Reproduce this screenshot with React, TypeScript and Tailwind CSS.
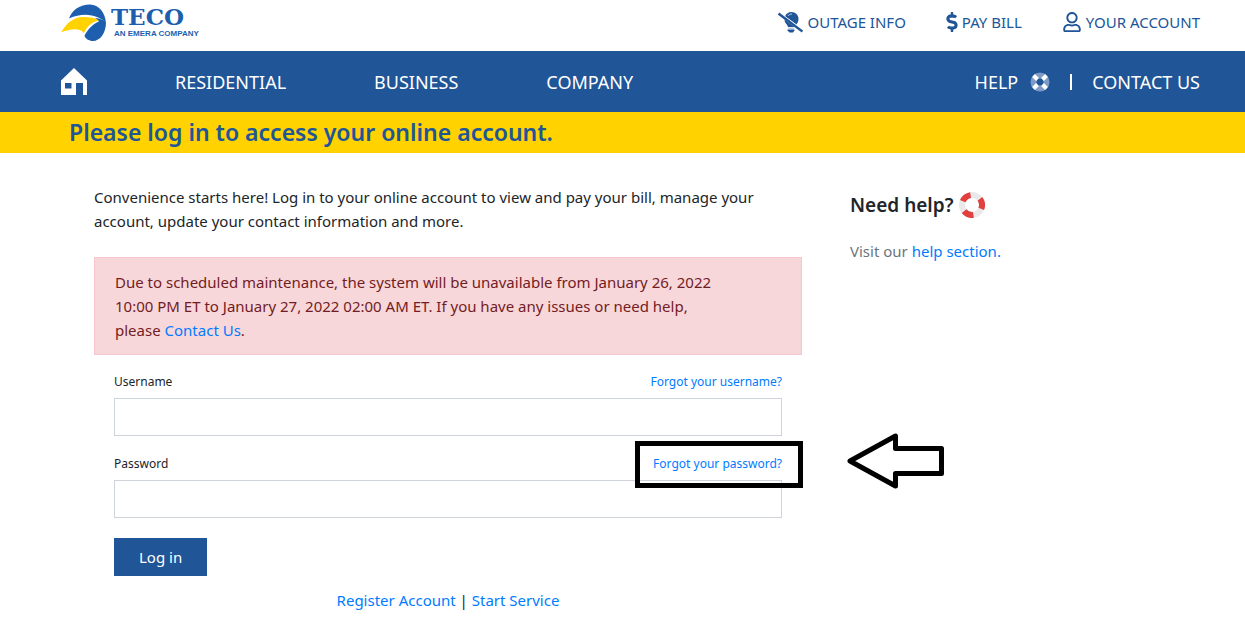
import type React from "react"
import { useState } from "react"
import { FaDollarSign, FaRegUser } from "react-icons/fa"

function TecoLogo() {
  return (
    <svg viewBox="0 0 142 38" className="h-[38px] w-[142px]" role="img" aria-label="TECO">
      {/* swoosh */}
      <path d="M8 14.500C11 6 19 0.500 29 0.500C38 1 44 8 45 19C39 12 24 7 8 14.500Z" fill="#1d5fae" />
      <path d="M34 14C39 14.500 43 16 45 18.500C45 29 39 37 32 37C28 37 24 34.500 23.500 31.500C27 25 32 20 38 17.500Z" fill="#1d5fae" />
      <path d="M0 28.500C5 20 12 13 22 13C29 13 35 14 38 16.500C31 18 26 22 23 29C18 23.500 9 25 0 28.500Z" fill="#ffd200" />
      <text x="50" y="21" fontFamily="DejaVu Serif, serif" fontWeight="700" fontSize="23" fill="#1d5fae">
        TECO
      </text>
      <text x="53" y="32" fontFamily="Liberation Sans, sans-serif" fontWeight="700" fontSize="8" fill="#1d5fae">
        AN EMERA COMPANY
      </text>
    </svg>
  )
}

function OutageIcon() {
  return (
    <svg viewBox="0 0 25 21" className="h-[21px] w-[25px]" aria-hidden="true">
      <path d="M7 4.500C8 1.500 10.500 0 13.500 0C17.500 0 20.500 3 20.500 7C20.500 9.500 19.500 11 18.500 12.500Z" fill="#205598" />
      <path d="M6.500 7.500L16 14.500V15H10C9.500 12 6.500 11.500 6.500 7.500Z" fill="#205598" />
      <path d="M10 4C11 2.500 12.500 2 14 2" stroke="#bccde2" strokeWidth="1" fill="none" />
      <path d="M10 15.500H16V17H10Z" fill="#bccde2" />
      <path d="M9.500 17.500H16.500V18.500L15 20.500H11.500L9.500 18.500Z" fill="#205598" />
      <path d="M1 0L25 18" stroke="#fff" strokeWidth="1" />
      <path d="M0.500 1.500L24.500 19.500" stroke="#205598" strokeWidth="2.400" />
    </svg>
  )
}

function HomeIcon() {
  return (
    <svg viewBox="0 0 26 27" className="h-[27px] w-[26px]" aria-hidden="true">
      <path fillRule="evenodd" fill="#fff" d="M13 0L26 12.500V27H22V15H15V27H0V12.500ZM4 15V20.500H10.500V15Z" />
    </svg>
  )
}

function HelpRing() {
  return (
    <svg viewBox="0 0 20 20" className="h-[20px] w-[20px]" aria-hidden="true">
      <circle cx="10" cy="10" r="6.500" fill="none" stroke="#7d9bc6" strokeWidth="6" />
      <path d="M3.500 3.500L7.500 7.500M16.500 3.500L12.500 7.500M3.500 16.500L7.500 12.500M16.500 16.500L12.500 12.500" stroke="#fff" strokeWidth="4" />
    </svg>
  )
}

function LifeRing() {
  return (
    <svg viewBox="0 0 26 26" className="h-[26px] w-[26px]" aria-hidden="true">
      <circle cx="13" cy="13" r="10" fill="none" stroke="#e9e9e9" strokeWidth="6" />
      <circle
        cx="13"
        cy="13"
        r="10"
        fill="none"
        stroke="#e23f3f"
        strokeWidth="6"
        pathLength="6"
        strokeDasharray="1 1"
        transform="rotate(-38 13 13)"
      />
    </svg>
  )
}

const navLinks = ["RESIDENTIAL", "BUSINESS", "COMPANY"]

export default function App() {
  const [username, setUsername] = useState("")
  const [password, setPassword] = useState("")

  const handleSubmit = (e: React.FormEvent) => {
    e.preventDefault()
  }

  return (
    <div className="min-h-screen bg-white font-['Noto_Sans',sans-serif] text-[15px] leading-6 text-[#212529]">
      <header className="flex h-[51px] items-start justify-between pl-[61px] pr-[45px]">
        <a href="#home" className="pt-1">
          <TecoLogo />
        </a>
        <div className="flex gap-10 pt-[10px] text-[#205598]">
          <a href="#outage" className="flex items-center gap-1">
            <OutageIcon />
            OUTAGE INFO
          </a>
          <a href="#bill" className="flex items-center gap-1">
            <FaDollarSign size={20} className="-mx-1" />
            PAY BILL
          </a>
          <a href="#account" className="flex items-center gap-1">
            <FaRegUser size={20} />
            YOUR ACCOUNT
          </a>
        </div>
      </header>

      <nav className="flex h-[61px] items-center justify-between bg-[#205598] pl-[61px] pr-[45px] text-lg text-white">
        <div className="flex items-center gap-[88px]">
          <a href="#home" aria-label="Home">
            <HomeIcon />
          </a>
          {navLinks.map((label) => (
            <a key={label} href={`#${label.toLowerCase()}`}>
              {label}
            </a>
          ))}
        </div>
        <div className="flex items-center gap-5">
          <a href="#help" className="flex items-center gap-3">
            HELP
            <HelpRing />
          </a>
          <span className="h-4 w-[2px] bg-white" />
          <a href="#contact">CONTACT US</a>
        </div>
      </nav>

      <div className="bg-[#ffd200] px-[69px] pb-[5px] pt-1">
        <h1 className="text-[23px] font-semibold leading-8 text-[#205598]">Please log in to access your online account.</h1>
      </div>

      <main className="grid grid-cols-[2fr_1fr] gap-12 pl-[94px] pr-[41px] pt-8">
        <section>
          <p className="mb-6">
            Convenience starts here! Log in to your online account to view and pay your bill, manage your account, update
            your contact information and more.
          </p>

          <div className="border border-[#f5c6cb] bg-[#f8d7da] py-3 pl-5 pr-20 text-[#721c24]">
            Due to scheduled maintenance, the system will be unavailable from January 26, 2022 10:00 PM ET to January 27,
            2022 02:00 AM ET. If you have any issues or need help, please{" "}
            <a href="#contact" className="text-[#007bff]">
              Contact Us
            </a>
            .
          </div>

          <form onSubmit={handleSubmit} className="px-5 pt-[15px]">
            <div className="mb-4">
              <div className="mb-1 flex justify-between text-xs leading-6">
                <label htmlFor="username">Username</label>
                <a href="#forgot-username" className="text-[#007bff]">
                  Forgot your username?
                </a>
              </div>
              <input
                id="username"
                type="text"
                value={username}
                onChange={(e) => setUsername(e.target.value)}
                className="block h-[38px] w-full border border-[#ced4da] px-3"
              />
            </div>

            <div className="relative mb-5">
              <div className="mb-1 flex justify-between text-xs leading-6">
                <label htmlFor="password">Password</label>
                <a href="#forgot-password" className="text-[#007bff]">
                  Forgot your password?
                </a>
              </div>
              <input
                id="password"
                type="password"
                value={password}
                onChange={(e) => setPassword(e.target.value)}
                className="block h-[38px] w-full border border-[#ced4da] px-3"
              />
              {/* highlight around the forgot password link */}
              <div className="pointer-events-none absolute -right-[21px] -top-[11px] h-[47px] w-[168px] border-[5px] border-black" />
              <svg
                viewBox="0 0 97 56"
                className="pointer-events-none absolute -right-[162px] -top-[19px] h-[56px] w-[97px]"
                aria-hidden="true"
              >
                <path
                  d="M3 28L48.500 3V15.500H94.500V40.500H48.500V53Z"
                  fill="#fff"
                  stroke="#000"
                  strokeWidth="5"
                  strokeLinejoin="round"
                />
              </svg>
            </div>

            <button type="submit" className="h-[38px] bg-[#205598] px-[25px] text-white">
              Log in
            </button>
          </form>

          <div className="pt-3 text-center">
            <a href="#register" className="text-[#007bff]">
              Register Account
            </a>{" "}
            |{" "}
            <a href="#start" className="text-[#007bff]">
              Start Service
            </a>
          </div>
        </section>

        <aside>
          <h2 className="mb-5 flex items-center gap-[6px] pt-[6px] text-[19px] font-semibold leading-7">
            Need help?
            <LifeRing />
          </h2>
          <p className="text-[#6c757d]">
            Visit our{" "}
            <a href="#help" className="text-[#007bff]">
              help section.
            </a>
          </p>
        </aside>
      </main>
    </div>
  )
}
